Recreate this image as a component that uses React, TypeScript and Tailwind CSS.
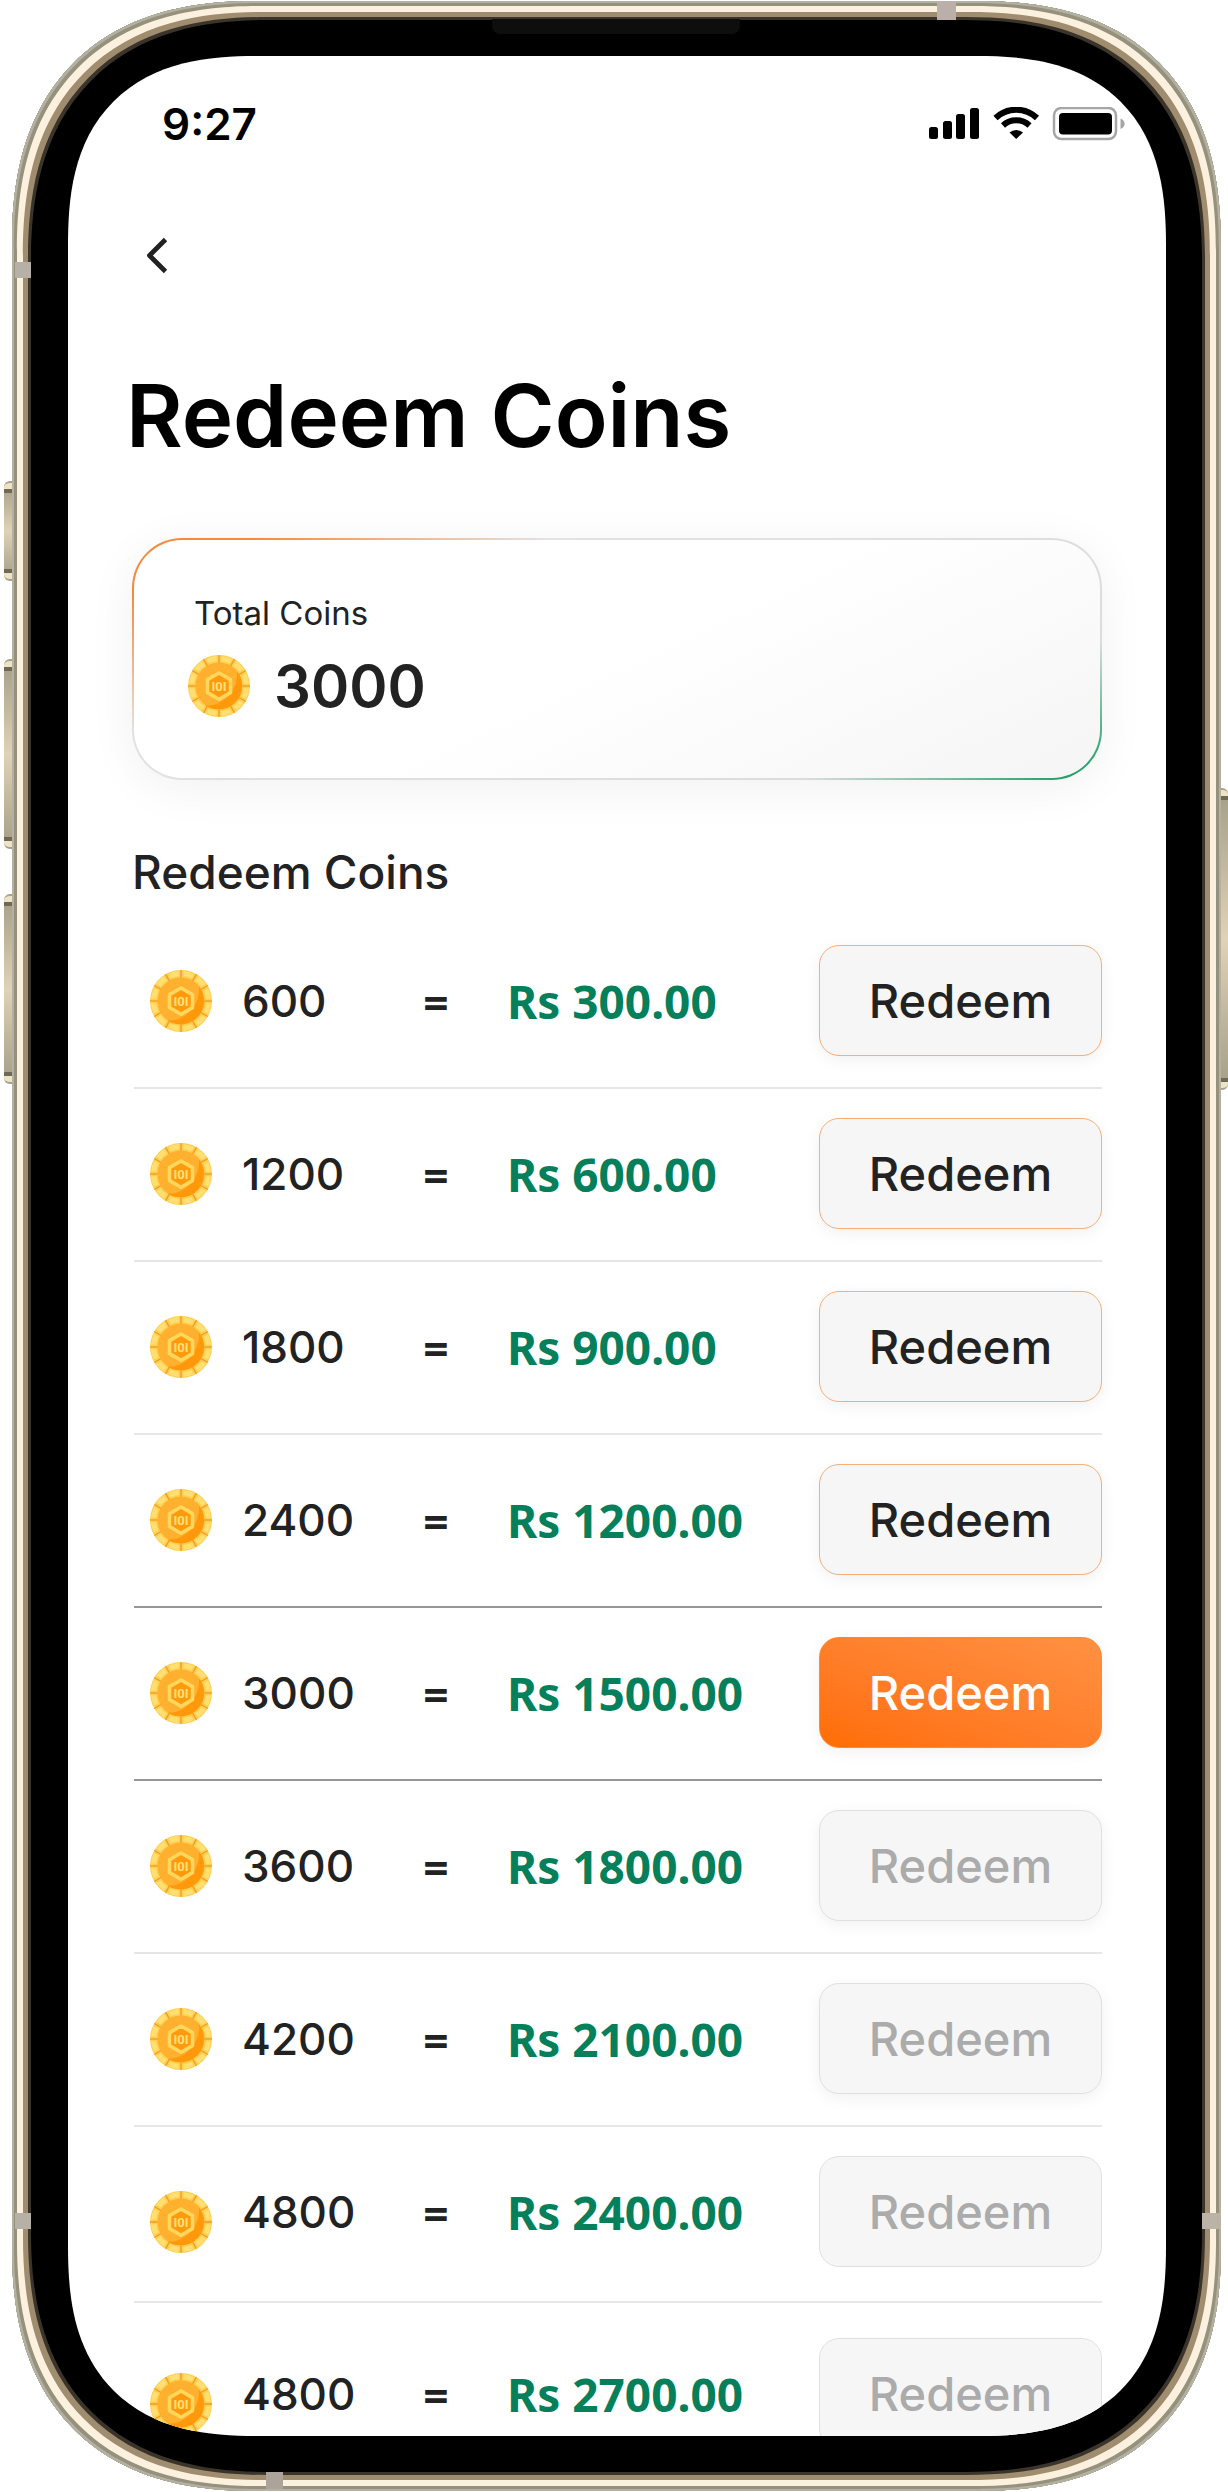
import React, { useState } from 'react';
import clsx from 'clsx';

interface RedeemOption {
  id: number;
  coins: number;
  amount: string;
  available: boolean;
  tall?: boolean;
}

const TOTAL_COINS = 3000;

const OPTIONS: RedeemOption[] = [
  { id: 1, coins: 600, amount: 'Rs 300.00', available: true },
  { id: 2, coins: 1200, amount: 'Rs 600.00', available: true },
  { id: 3, coins: 1800, amount: 'Rs 900.00', available: true },
  { id: 4, coins: 2400, amount: 'Rs 1200.00', available: true },
  { id: 5, coins: 3000, amount: 'Rs 1500.00', available: true },
  { id: 6, coins: 3600, amount: 'Rs 1800.00', available: false },
  { id: 7, coins: 4200, amount: 'Rs 2100.00', available: false },
  { id: 8, coins: 4800, amount: 'Rs 2400.00', available: false, tall: true },
  { id: 9, coins: 4800, amount: 'Rs 2700.00', available: false, tall: true },
];

const TICKS = [0, 30, 60, 90, 120, 150, 180, 210, 240, 270, 300, 330];

const CoinIcon = () => (
  <svg viewBox="0 0 62 62" className="w-[62px] h-[62px] shrink-0" aria-hidden="true">
    <circle cx="31" cy="31" r="31" fill="#ffcf4d" />
    <circle cx="31" cy="31" r="27.5" fill="none" stroke="#ffdf72" strokeWidth="5" strokeDasharray="9.600 4.800" strokeDashoffset="-2.400" />
    {TICKS.map((angle) => (
      <path key={angle} d="M31 0v8" stroke="#f39a2a" strokeWidth="1.300" transform={`rotate(${angle} 31 31)`} />
    ))}
    <circle cx="31" cy="31" r="23.500" fill="#ffb02e" />
    <path d="M49 16.500a23.500 23.500 0 0 1-31.500 34c16 1.500 33-14 31.500-34z" fill="#ff980a" />
    <path d="M31 18l11.500 6.600v13L31 44.200l-11.500-6.600v-13z" fill="#ff9a0c" stroke="#ffd75c" strokeWidth="3.600" strokeLinejoin="round" />
    <text x="31" y="36" textAnchor="middle" fontFamily="Roboto, sans-serif" fontWeight="700" fontSize="13" fill="#ffe07a">
      I0I
    </text>
  </svg>
);

const StatusIcons = () => (
  <svg viewBox="0 0 197 34" className="w-[197px] h-[34px]" aria-hidden="true">
    <rect x="0" y="20" width="9" height="12" rx="2.500" />
    <rect x="14" y="14" width="9" height="18" rx="2.500" />
    <rect x="27" y="7" width="9" height="25" rx="2.500" />
    <rect x="41" y="1" width="9" height="31" rx="2.500" />
    <path d="M66.500 11a30 30 0 0 1 41.500 0" fill="none" stroke="#000" strokeWidth="6" />
    <path d="M74 18.500a19.500 19.500 0 0 1 26.500 0" fill="none" stroke="#000" strokeWidth="6" />
    <path d="M80.500 25.500a10 10 0 0 1 13.500 0l-6.800 6.500z" />
    <rect x="125" y="1" width="62" height="31" rx="7.500" fill="none" stroke="#a6a6a6" strokeWidth="2.500" />
    <rect x="130" y="6" width="53" height="21.500" rx="4" />
    <path d="M191.500 11.500c5.500 2 5.500 8.500 0 10.500z" fill="#a6a6a6" />
  </svg>
);

interface SideKeyProps {
  className: string;
}

const SideKey: React.FC<SideKeyProps> = ({ className }) => (
  <div className={clsx('absolute w-2 overflow-hidden border-y-2 border-[#a9a088] flex flex-col justify-between bg-linear-to-b from-[#a59e86] via-[#e0d2b6] to-[#a59e86]', className)}>
    <span className="h-2.5 bg-[#efe3c6] border-b-4 border-[#6f6854]" />
    <span className="h-2.5 bg-[#efe3c6] border-t-4 border-[#6f6854]" />
  </div>
);

interface RedeemRowProps {
  option: RedeemOption;
  selected: boolean;
  dark: boolean;
  last: boolean;
  onSelect: (id: number) => void;
}

const RedeemRow: React.FC<RedeemRowProps> = ({ option, selected, dark, last, onSelect }) => (
  <li
    className={clsx(
      'grid grid-cols-[62px_150px_55px_1fr_283px] gap-x-[30px] items-center pl-4 border-b-2',
      option.tall ? 'pb-[34px]' : 'pb-[31px]',
      last ? 'pt-[35px]' : 'pt-[29px]',
      dark ? 'border-[#979797]' : 'border-[#e6e6e6]'
    )}
  >
    <span className={clsx(option.tall && 'pt-5')}>
      <CoinIcon />
    </span>
    <span className="text-[44px]">{option.coins}</span>
    <span className="font-['Lato',sans-serif] font-black text-5xl leading-14">=</span>
    <span className="font-['Noto_Sans',sans-serif] font-bold text-[#05805a] whitespace-nowrap">{option.amount}</span>
    <button
      type="button"
      disabled={!option.available}
      onClick={() => onSelect(option.id)}
      className={clsx(
        'h-[111px] rounded-[20px] border text-[47px] font-medium',
        selected && 'border-[#ff8a30] bg-linear-to-tr from-[#ff6d00] to-[#ff9142] text-white shadow-[0_4px_16px_rgba(0,0,0,0.06)]',
        !selected && option.available && 'border-[#f3b07a] bg-[#f6f6f6] text-[#222] shadow-[0_4px_16px_rgba(0,0,0,0.06)]',
        !option.available && 'border-[#e0e0e0] bg-[#f6f6f6] text-[#ababab]',
        !option.available && !option.tall && 'shadow-[0_4px_16px_rgba(0,0,0,0.06)]'
      )}
    >
      Redeem
    </button>
  </li>
);

export default function App() {
  const [selectedId, setSelectedId] = useState(5);

  return (
    <div className="relative h-screen overflow-hidden bg-white pt-px pb-px pl-3 pr-[7px] font-['Inter',sans-serif] text-[#222]">
      <SideKey className="left-1 top-[481px] h-[100px] rounded-l-md" />
      <SideKey className="left-1 top-[659px] h-[190px] rounded-l-md" />
      <SideKey className="left-1 top-[894px] h-[190px] rounded-l-md" />
      <SideKey className="right-0 top-[788px] h-[302px] rounded-r-md" />

      <div className="relative h-full overflow-hidden bg-black p-[55px] pl-14 rounded-[211px] supports-[corner-shape:squircle]:rounded-[246px] supports-[corner-shape:squircle]:[corner-shape:superellipse(1.26)] shadow-[inset_0_0_0_2px_#b3b1a2,inset_0_0_0_5px_#95917c,inset_0_0_0_11px_#fcf1df,inset_0_0_0_16px_#a08d6f,inset_0_0_0_19px_#3a342a]">
        <span className="absolute top-0 left-[925px] w-[19px] h-[19px] bg-[#bbb0a9]" />
        <span className="absolute top-[261px] left-[3px] w-4 h-4 bg-[#b7b0a6]" />
        <span className="absolute bottom-[262px] left-[3px] w-4 h-4 bg-[#b7b0a6]" />
        <span className="absolute bottom-[262px] right-0 w-[19px] h-4 bg-[#bab3a6]" />
        <span className="absolute bottom-[2px] left-[254px] w-[17px] h-[17px] bg-[#aca39b]" />
        <span className="absolute top-[18px] left-[480px] w-[248px] h-[15px] rounded-b-lg bg-[#0e0e0e]" />

        <main className="h-full overflow-hidden bg-white rounded-[155px] supports-[corner-shape:squircle]:rounded-[190px] supports-[corner-shape:squircle]:[corner-shape:superellipse(1.34)]">
          <header className="flex items-center justify-between pt-10 pl-[94px] pr-[40px] text-black">
            <span className="text-[44px] leading-14 font-semibold">9:27</span>
            <StatusIcons />
          </header>

          <button type="button" aria-label="Back" className="block mt-20 ml-16 w-12 h-12">
            <svg viewBox="0 0 48 48" className="w-12 h-12" fill="none" stroke="#222" strokeWidth="4.800">
              <path d="M33.500 7.500L17.500 23.500L33.500 39.500" strokeLinejoin="round" />
            </svg>
          </button>

          <h1 className="mt-[88px] px-[58px] text-[87px] leading-24 font-semibold text-black">Redeem Coins</h1>

          <section className="mt-[74px] mx-16 h-[242px] pt-[51px] pl-[54px] rounded-[50px] border-2 border-transparent [background:linear-gradient(155deg,#fff_50%,#f5f5f5)_padding-box,linear-gradient(155deg,#f58a3c_8%,#e2e2e2_28%,#dcdcdc_80%,#1f9d68_98%)_border-box] shadow-[0_8px_48px_rgba(0,0,0,0.06)]">
            <p className="pl-1.5 text-[33px] leading-11">Total Coins</p>
            <div className="mt-5 flex items-center gap-6">
              <CoinIcon />
              <span className="text-[58px] leading-[62px] font-semibold">{TOTAL_COINS}</span>
            </div>
          </section>

          <section className="text-[46px] leading-14 font-medium">
            <h2 className="mt-16 px-16">Redeem Coins</h2>
            <ul className="mt-4 mx-16 pl-[2px]">
              {OPTIONS.map((option, index) => (
                <RedeemRow
                  key={option.id}
                  option={option}
                  selected={option.id === selectedId}
                  dark={option.id === selectedId || option.id === selectedId - 1}
                  last={index === OPTIONS.length - 1}
                  onSelect={setSelectedId}
                />
              ))}
            </ul>
          </section>
        </main>
      </div>
    </div>
  );
}
